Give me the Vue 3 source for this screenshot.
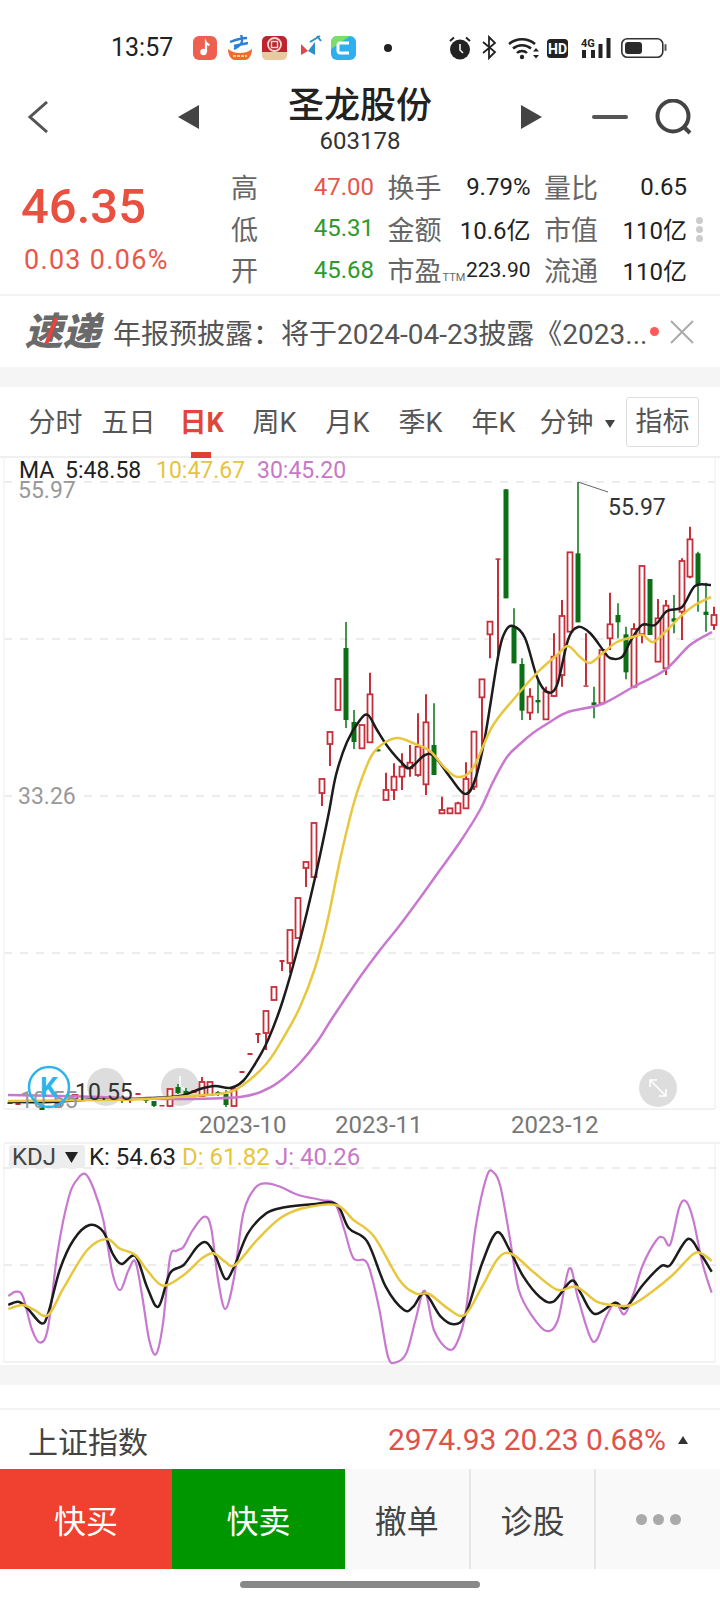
<script setup>
const smooth = (p) => {
  let d = `M${p[0][0].toFixed(1)} ${p[0][1].toFixed(1)}`
  for (let i = 0; i < p.length - 1; i++) {
    const a = p[i - 1] || p[i], b = p[i], c = p[i + 1], e = p[i + 2] || c
    const c1x = b[0] + (c[0] - a[0]) / 6, c1y = b[1] + (c[1] - a[1]) / 6
    const c2x = c[0] - (e[0] - b[0]) / 6, c2y = c[1] - (e[1] - b[1]) / 6
    d += `C${c1x.toFixed(1)} ${c1y.toFixed(1)} ${c2x.toFixed(1)} ${c2y.toFixed(1)} ${c[0].toFixed(1)} ${c[1].toFixed(1)}`
  }
  return d
}
const zoomR = (a) => a.map(([x, t, b, bt, bb, k]) => [360 + x / 3, 460 + t / 3, 460 + b / 3, 460 + bt / 3, 460 + bb / 3, k])
const candles = [
  [10,1102,1104,1102,1104,'g'],[18,1103,1105,1103,1105,'r'],[42,1106,1110,1106,1110,'g'],[58,1103,1107,1103,1107,'r'],[75,1095,1099,1095,1099,'r'],
  [122,1098,1103,1098,1101,'g'],[130,1098,1103,1098,1101,'r'],[138,1093,1095,1093,1095,'r'],[146,1097,1103,1097,1101,'g'],[154,1101,1107,1101,1106,'g'],[162,1105,1106,1105,1106,'r'],
  [170,1089,1106,1089,1106,'r'],[178,1084,1094,1087,1093,'g'],[186,1088,1096,1091,1095,'g'],[194,1090,1093,1090,1093,'r'],[202,1077,1097,1082,1096,'r'],[210,1082,1095,1082,1095,'r'],
  [218,1091,1096,1092,1095,'g'],[226,1090,1107,1094,1105,'g'],[234,1089,1106,1089,1106,'r'],[242,1071,1073,1071,1073,'r'],[250,1053,1055,1053,1055,'r'],
  [258,1033,1043,1033,1035,'r'],[266,1011,1050,1011,1033,'r'],[274,987,1000,987,1000,'r'],[282,960,971,960,962,'r'],[290,930,973,930,963,'r'],[298,898,938,898,938,'r'],
  [306,862,887,862,868,'r'],[314,823,877,823,877,'r'],[322,779,806,779,793,'r'],[330,732,766,732,744,'r'],[338,679,710,679,710,'r'],[346,622,728,648,720,'g'],[354,710,749,722,742,'g'],
  ...zoomR([
    [6,795,865,795,865,'r'],[30,638,847,703,847,'r'],[54,868,874,868,874,'g'],[78,938,1020,990,1020,'r'],[102,910,1020,950,990,'r'],[126,880,990,920,950,'r'],[150,855,950,908,925,'r'],
    [174,760,950,860,945,'r'],[198,703,1005,787,973,'r'],[222,730,945,855,945,'g'],[246,1010,1060,1050,1060,'r'],[270,1045,1060,1045,1060,'r'],[294,1025,1060,1030,1060,'r'],[318,907,1045,957,1045,'r'],[342,815,990,815,980,'r'],
    [366,658,870,658,712,'r'],[390,485,595,485,523,'r'],[414,295,600,295,297,'r'],[438,88,415,88,415,'g'],[462,445,610,500,610,'g'],[486,595,780,612,752,'g'],[510,685,780,710,758,'r'],[534,660,760,720,727,'g'],
    [558,680,780,695,778,'r'],[582,520,710,590,708,'r'],[606,420,680,468,645,'r'],[630,277,515,277,515,'r'],[654,66,487,280,487,'g'],[678,520,678,676,678,'r'],[702,680,775,727,735,'g'],[726,570,730,570,730,'r'],
    [750,398,570,493,535,'r'],[774,430,535,465,487,'g'],[798,500,658,523,637,'g'],[822,490,685,507,680,'r'],[846,318,550,318,522,'r'],[870,357,525,357,525,'g'],[894,417,605,475,605,'r'],[918,420,645,437,625,'r'],
    [942,405,520,475,485,'g'],[966,295,540,303,455,'r'],[990,200,355,238,350,'r'],[1014,275,455,280,375,'g'],[1038,368,515,455,465,'g'],[1062,440,510,465,495,'r'],
  ]),
]
const ma5 = smooth([[8,1102],[50,1102],[100,1099],[150,1098],[180,1096],[200,1089],[215,1086],[230,1088],[243,1081],[255,1064],[268,1040],[283,1000],[300,940],[315,878],[328,817],[336,775],[347,742],[360,720],[368,715],[377,730],[388,747],[402,763],[410,768],[425,755],[435,757],[450,777],[465,794],[475,780],[485,737],[498,657],[505,632],[513,626],[525,638],[537,677],[547,692],[557,685],[568,640],[578,627],[590,633],[603,650],[610,658],[622,657],[630,642],[642,625],[655,625],[667,611],[682,607],[695,586],[711,585]])
const ma10 = smooth([[8,1101],[100,1100],[150,1099],[190,1096],[225,1093],[243,1085],[267,1063],[285,1035],[300,1007],[315,968],[327,923],[340,860],[353,806],[362,778],[372,755],[384,743],[398,738],[413,743],[430,751],[445,768],[458,777],[473,768],[492,727],[513,700],[537,673],[557,655],[568,646],[580,657],[590,663],[603,653],[617,642],[633,637],[643,635],[653,642],[667,630],[682,615],[695,605],[711,597]])
const ma30 = smooth([[8,1095],[100,1097],[170,1099],[240,1097],[267,1089],[284,1078],[300,1063],[317,1042],[333,1017],[360,977],[380,950],[400,925],[420,898],[440,870],[460,842],[480,810],[493,782],[507,757],[520,744],[533,733],[550,722],[568,712],[602,704],[633,687],[665,670],[690,645],[712,632]])
const kz = (a) => smooth(a.map(([x, y]) => [x / 2.178, 1130 + y / 3]))
const kdjJ = kz([[18,498],[35,485],[50,500],[70,600],[88,638],[105,590],[125,370],[150,200],[170,145],[187,133],[205,180],[225,270],[245,430],[262,480],[280,420],[295,395],[310,500],[325,630],[340,672],[355,580],[370,385],[385,362],[400,350],[420,300],[445,260],[460,295],[475,450],[491,537],[510,440],[530,250],[555,175],[580,160],[610,170],[650,195],[700,210],[730,222],[750,300],[770,385],[800,400],[825,530],[845,680],[862,697],[885,670],[905,570],[925,482],[945,600],[975,657],[995,640],[1015,540],[1035,300],[1060,140],[1075,127],[1090,170],[1110,320],[1130,480],[1160,560],[1190,603],[1215,570],[1240,415],[1260,510],[1292,635],[1320,560],[1340,518],[1360,553],[1380,490],[1400,405],[1430,330],[1445,323],[1460,343],[1480,230],[1495,215],[1510,270],[1530,400],[1550,488]])
const kdjK = kz([[18,525],[40,515],[60,535],[90,580],[105,550],[130,420],[160,330],[195,285],[225,305],[245,370],[265,402],[295,378],[320,470],[345,530],[370,430],[400,405],[430,350],[450,338],[470,380],[491,447],[510,410],[540,310],[580,250],[620,232],[680,223],[732,222],[760,295],[800,335],[840,470],[880,540],[900,530],[925,490],[960,560],[990,583],[1015,550],[1050,400],[1082,307],[1110,360],[1140,440],[1175,500],[1205,515],[1245,452],[1265,490],[1295,552],[1340,518],[1362,535],[1400,465],[1440,408],[1460,405],[1498,327],[1525,370],[1550,425]])
const kdjD = kz([[18,537],[50,525],[75,540],[105,555],[140,470],[190,360],[232,327],[260,355],[295,375],[320,420],[355,467],[400,435],[440,385],[465,370],[490,395],[512,405],[560,330],[610,265],[660,235],[732,225],[770,270],[815,320],[870,450],[905,490],[935,492],[975,535],[1012,555],[1050,470],[1085,385],[1115,372],[1165,430],[1215,480],[1255,470],[1300,515],[1335,525],[1375,525],[1420,485],[1465,435],[1510,372],[1530,372],[1550,393]])
const tabs = ['分时', '五日', '日K', '周K', '月K', '季K', '年K', '分钟']
const stats = [
  { l: '高', v: '47.00', c: 'up', l2: '换手', v2: '9.79%', l3: '量比', v3: '0.65' },
  { l: '低', v: '45.31', c: 'down', l2: '金额', v2: '10.6亿', l3: '市值', v3: '110亿' },
  { l: '开', v: '45.68', c: 'down', l2: '市盈', ttm: true, v2: '223.90', l3: '流通', v3: '110亿' },
]
</script>

<template>
  <div class="page">
    <div class="status">
      <span class="time">13:57</span>
      <svg class="st-apps" width="176" height="26" viewBox="0 0 176 26">
        <rect x="2" y="1" width="24" height="24" rx="6" fill="#ee5f50"/>
        <circle cx="12.500" cy="17" r="3.200" fill="#fff"/>
        <path d="M15 17V7.500c1 1.800 2.500 2.200 3.500 2.600" stroke="#fff" stroke-width="2.200" fill="none"/>
        <path d="M39 7c5-2 11-4 17-4M43 11c4-1 9-2 14-3M50 0c2 4 1 8-1 10s-4 3-6 4" stroke="#2a7fd8" stroke-width="2.400" fill="none"/>
        <path d="M37 14c4 3 8 4 12 4s8-1 12-4c0 6-3 11-7 11H44c-4 0-7-5-7-11z" fill="#ef6b30"/>
        <path d="M42 21h14" stroke="#f7d27a" stroke-width="2" stroke-dasharray="3 1"/>
        <rect x="71" y="1" width="25" height="18" rx="5" fill="#bd2330"/>
        <path d="M71 14h25v6c0 3-2 5-5 5H76c-3 0-5-2-5-5z" fill="#e9c9a0"/>
        <rect x="71" y="8" width="25" height="9" fill="#bd2330"/>
        <circle cx="83.500" cy="9.500" r="6.500" fill="none" stroke="#f3d9cf" stroke-width="1.800"/>
        <rect x="80.500" y="6.500" width="6" height="6" fill="none" stroke="#f3d9cf" stroke-width="1.400"/>
        <path d="M110 20V9l7 7z" fill="#e04848"/>
        <path d="M117 16l7-9v13z" fill="#2d8fc4"/>
        <path d="M119 7l10-6M126 1l4 5" stroke="#2d8fc4" stroke-width="2" fill="none"/>
        <rect x="140" y="1" width="25" height="24" rx="6" fill="#2fb0ee"/>
        <path d="M140 14V7c0-3 3-6 6-6h13z" fill="#7edc6a"/>
        <path d="M158 8h-9c-1 0-2 1-2 2v6c0 1 1 2 2 2h9" stroke="#fff" stroke-width="3" fill="none"/>
      </svg>
      <span class="st-dot"></span>
      <svg class="st-sys" width="220" height="26" viewBox="0 0 220 26">
        <circle cx="11" cy="14.500" r="10" fill="#222"/>
        <path d="M11 9v6l3 3" stroke="#fff" stroke-width="1.500" fill="none"/>
        <path d="M1 6l4-3.500M21 6l-4-3.500" stroke="#222" stroke-width="2"/>
        <path d="M34 7l12 10-6 6V2l6 6-12 10" stroke="#222" stroke-width="1.800" fill="none"/>
        <path d="M60 9a20 20 0 0 1 26 0M64 13.500a14 14 0 0 1 18 0M68 18a7 7 0 0 1 10 0" stroke="#222" stroke-width="2.500" fill="none"/>
        <circle cx="73" cy="22" r="2.200" fill="#222"/>
        <path d="M84 16.500l3-3.500 3 3.500zM84 20l3 3.500 3-3.500z" fill="#222"/>
        <rect x="98" y="4" width="21" height="19" rx="3.500" fill="#222"/>
        <text x="108.500" y="18.500" class="hd">HD</text>
        <text x="132" y="12" class="fg">4G</text>
        <path d="M135 15v8M144 15v8M151.500 9v14M159.500 3v20" stroke="#222" stroke-width="4" fill="none"/>
        <rect x="172.800" y="3.800" width="41" height="18.500" rx="5.500" fill="none" stroke="#333" stroke-width="1.600"/>
        <rect x="176" y="7" width="17" height="12" rx="3" fill="#2a2a2a"/>
        <rect x="215.500" y="9" width="2" height="7" rx="1" fill="#555"/>
      </svg>
    </div>

    <header class="head">
      <svg class="back" width="20" height="32" viewBox="0 0 20 32"><path d="M19 1L2 16l17 15" stroke="#555" stroke-width="3" fill="none"/></svg>
      <svg class="tri-l" width="21" height="24" viewBox="0 0 21 24"><path d="M21 0v24L0 12z" fill="#444"/></svg>
      <div class="title-col">
        <div class="title">圣龙股份</div>
        <div class="code">603178</div>
      </div>
      <svg class="tri-r" width="21" height="24" viewBox="0 0 21 24"><path d="M0 0v24l21-12z" fill="#444"/></svg>
      <span class="minus"></span>
      <svg class="search" width="38" height="36" viewBox="0 0 38 36"><circle cx="18" cy="17" r="15.500" stroke="#444" stroke-width="4" fill="none"/><path d="M29 28l6 6" stroke="#444" stroke-width="4"/></svg>
    </header>

    <section class="quote">
      <div class="price-col">
        <div class="price">46.35</div>
        <div class="chg">0.03 0.06%</div>
      </div>
      <div class="stats">
        <template v-for="s in stats" :key="s.l">
          <div class="cell"><span class="lb">{{ s.l }}</span><span class="val" :class="s.c">{{ s.v }}</span></div>
          <div class="cell"><span class="lb">{{ s.l2 }}<i v-if="s.ttm" class="ttm">TTM</i></span><span class="val" :class="{ small: s.ttm }">{{ s.v2 }}</span></div>
          <div class="cell"><span class="lb">{{ s.l3 }}</span><span class="val">{{ s.v3 }}</span></div>
        </template>
      </div>
      <div class="dots"><i></i><i></i><i></i></div>
    </section>

    <section class="news">
      <span class="logo">速递<i class="bolt"></i></span>
      <span class="news-text">年报预披露：将于2024-04-23披露《2023...</span>
      <i class="news-dot"></i>
      <svg class="close" width="24" height="24" viewBox="0 0 24 24"><path d="M1 1l22 22M23 1L1 23" stroke="#aaa" stroke-width="2"/></svg>
    </section>

    <div class="band"></div>

    <nav class="tabs">
      <div v-for="t in tabs" :key="t" class="tab" :class="{ on: t === '日K' }">
        {{ t }}<i v-if="t === '分钟'" class="caret"></i><i v-if="t === '日K'" class="bar"></i>
      </div>
      <div class="zb">指标</div>
    </nav>

    <svg class="chart" width="720" height="682" viewBox="0 458 720 682">
      <g class="grid">
        <path d="M4 482H715M4 639H715M4 796H715M4 953H715"/>
      </g>
      <path d="M4 458V1109M715 458V1109" stroke="#f4f4f4" stroke-width="1.500"/>
      <path d="M4 1109H715" stroke="#eee" stroke-width="1.500"/>
      <circle cx="106" cy="1087" r="19" fill="#ddd"/>
      <circle cx="180" cy="1087" r="19" fill="#ddd"/>
      <path d="M180 1076v11l5 2" stroke="#fff" stroke-width="1.500" fill="none"/>
      <g v-for="c in candles" :key="c[0]">
        <template v-if="c[5] === 'r'">
          <path :d="`M${c[0]} ${c[1]}V${c[3]}M${c[0]} ${c[4]}V${c[2]}`" stroke="#c42f3a" stroke-width="2" fill="none"/>
          <rect v-if="c[4] - c[3] > 3" :x="c[0] - 2.500" :y="c[3]" width="5" :height="c[4] - c[3]" fill="#fff" stroke="#c42f3a" stroke-width="1.800"/>
          <rect v-else :x="c[0] - 2.500" :y="c[3]" width="5" :height="Math.max(c[4] - c[3], 1.500)" fill="#c42f3a"/>
        </template>
        <template v-else>
          <path :d="`M${c[0]} ${c[1]}V${c[2]}`" stroke="#2f8a3c" stroke-width="1.800"/>
          <rect :x="c[0] - 2.500" :y="c[3]" width="5" :height="Math.max(c[4] - c[3], 2)" fill="#0c6f16"/>
        </template>
      </g>
      <path :d="ma5" class="ln" stroke="#1c1c1c"/>
      <path :d="ma30" class="ln" stroke="#c878cf"/>
      <path :d="ma10" class="ln" stroke="#e8c73e"/>
      <path d="M578 482l30 10" stroke="#666" stroke-width="1" fill="none"/>
      <text x="608" y="515" class="t23" fill="#333">55.97</text>
      <text x="19" y="478" class="t23" fill="#222">MA</text>
      <text x="65" y="478" class="t23" fill="#222">5:48.58</text>
      <text x="156" y="478" class="t23" fill="#e6c53d">10:47.67</text>
      <text x="257" y="478" class="t23" fill="#c878c8">30:45.20</text>
      <text x="18" y="498" class="t23" fill="#999">55.97</text>
      <rect x="12" y="786" width="70" height="20" fill="#fff"/>
      <text x="18" y="804" class="t23" fill="#999">33.26</text>
      <text x="20" y="1108" class="t23" fill="#999">10.55</text>
      <text x="75" y="1100" class="t23" fill="#333">10.55</text>
      <circle cx="49" cy="1087" r="20" fill="none" stroke="#2db5ea" stroke-width="2.500"/>
      <text x="49" y="1097" class="kk">K</text>
      <circle cx="658" cy="1088" r="19" fill="#ddd"/>
      <path d="M650 1080l16 16M650 1087v-7h7M666 1089v7h-7" stroke="#fff" stroke-width="1.600" fill="none"/>
      <text x="199" y="1133" class="t24" fill="#777">2023-10</text>
      <text x="335" y="1133" class="t24" fill="#777">2023-11</text>
      <text x="511" y="1133" class="t24" fill="#777">2023-12</text>
    </svg>

    <svg class="kdj" width="720" height="225" viewBox="0 1140 720 225">
      <path d="M4 1143H720" stroke="#eee" stroke-width="1.500"/>
      <path d="M4 1143V1362M715 1143V1362" stroke="#f4f4f4" stroke-width="1.500"/>
      <path d="M4 1362H715" stroke="#eee" stroke-width="1.500"/>
      <g class="grid"><path d="M4 1168H720M4 1265H720"/></g>
      <rect x="9" y="1145" width="76" height="23" rx="3" fill="#ededed"/>
      <text x="12" y="1165" class="t24" fill="#444">KDJ</text>
      <path d="M65 1152h13l-6.500 11z" fill="#222"/>
      <text x="89" y="1165" class="t24" fill="#222">K: 54.63</text>
      <text x="182" y="1165" class="t24" fill="#e6c53d">D: 61.82</text>
      <text x="275" y="1165" class="t24" fill="#c878c8">J: 40.26</text>
      <path :d="kdjJ" class="ln2" stroke="#c878cf"/>
      <path :d="kdjK" class="ln" stroke="#1c1c1c"/>
      <path :d="kdjD" class="ln" stroke="#e8c73e"/>
    </svg>

    <div class="band band2"></div>
    <div class="peek"><span>NEW</span></div>

    <section class="index">
      <span class="idx-name">上证指数</span>
      <span class="idx-val">2974.93 20.23 0.68%</span>
      <i class="idx-up"></i>
    </section>

    <section class="btns">
      <div class="btn buy">快买</div>
      <div class="btn sell">快卖</div>
      <div class="btn pl">撤单</div>
      <div class="btn pl">诊股</div>
      <div class="btn pl more"><i></i><i></i><i></i></div>
    </section>
    <div class="home"><i></i></div>
  </div>
</template>

<style>
html, body { background: #fff; }
</style>

<style scoped>
.page { width: 720px; height: 1601px; overflow: hidden; background: #fff; font-family: Roboto, "Noto Sans CJK SC", sans-serif; color: #333; }
.status { height: 76px; display: flex; align-items: center; padding: 20px 0 0 111px; box-sizing: border-box; }
.time { font-size: 25px; line-height: 30px; width: 80px; color: #222; }
.st-dot { width: 8px; height: 8px; border-radius: 50%; background: #222; margin-left: 17px; }
.st-sys { margin-left: 57px; }
.hd { font: 700 14px Roboto, sans-serif; fill: #fff; text-anchor: middle; }
.fg { font: 700 11px Roboto, sans-serif; fill: #222; }

.head { height: 91px; box-sizing: border-box; padding: 0 0 9px 28px; display: flex; align-items: center; }
.tri-l { margin-left: 130px; }
.title-col { width: 322px; margin-top: 5px; text-align: center; }
.title { font-size: 36px; line-height: 42px; font-weight: 500; color: #222; }
.code { font-size: 24px; line-height: 28px; color: #333; }
.minus { width: 36px; height: 4px; border-radius: 2px; background: #555; margin-left: 50px; }
.search { margin-left: 27px; }

.quote { height: 127px; position: relative; display: flex; }
.price-col { width: 231px; box-sizing: border-box; padding-left: 21px; }
.price { font-size: 49px; line-height: 56px; margin-top: 12px; color: #e8503f; font-weight: 500; }
.chg { font-size: 27px; line-height: 34px; margin: 8px 0 0 3px; letter-spacing: 1.300px; color: #e8574a; }
.stats { display: grid; grid-template-columns: repeat(3, 143px); column-gap: 13.500px; grid-auto-rows: 41.500px; margin-top: -1px; }
.cell { display: flex; justify-content: space-between; align-items: center; }
.lb { font-size: 27px; color: #666; white-space: nowrap; }
.ttm { font-style: normal; font-size: 11px; color: #666; margin-left: 1px; }
.val { font-size: 24px; color: #222; white-space: nowrap; }
.val.small { font-size: 21px; }
.val.up { color: #e4564a; }
.val.down { color: #2c9a2c; }
.dots { position: absolute; left: 696px; top: 50px; display: flex; flex-direction: column; gap: 2px; }
.dots i { width: 7px; height: 7px; border-radius: 50%; background: #ccc; }

.news { height: 73px; border-top: 2px solid #f3f3f3; box-sizing: border-box; display: flex; align-items: center; padding-left: 28px; }
.logo { position: relative; width: 75px; font-size: 38px; line-height: 40px; font-weight: 900; color: #6a6a6a; white-space: nowrap; transform: skewX(-14deg); }
.bolt { position: absolute; left: 21px; top: 6px; width: 4px; height: 26px; background: #e8443a; transform: skewX(-8deg); }
.news-text { font-size: 28px; color: #555; margin-left: 10px; width: 533px; white-space: nowrap; }
.news-dot { width: 9px; height: 9px; border-radius: 50%; background: #ff5a5a; margin-left: 4px; }
.close { margin-left: 11px; }

.band { height: 20px; background: #f5f5f5; }

.tabs { height: 71px; box-sizing: border-box; border-bottom: 2px solid #f0f0f0; padding-left: 19px; display: flex; align-items: flex-start; }
.tab { width: 73px; height: 69px; line-height: 69px; text-align: center; position: relative; font-size: 27px; color: #555; white-space: nowrap; margin-top: 2px; }
.tab.on { color: #e0473c; font-weight: 700; }
.bar { position: absolute; left: 26px; bottom: 0px; width: 20px; height: 6px; background: #e23e36; }
.caret { position: absolute; left: 75px; top: 31px; width: 0; height: 0; border-left: 5.500px solid transparent; border-right: 5.500px solid transparent; border-top: 8px solid #444; }
.zb { margin: 10px 0 0 23px; width: 73px; height: 50px; box-sizing: border-box; border: 1px solid #ddd; border-radius: 3px; font-size: 27px; line-height: 48px; text-align: center; color: #555; }

.chart, .kdj { display: block; }
.grid path { stroke: #e6e6e6; stroke-width: 1.500; stroke-dasharray: 8 8; fill: none; }
.ln { fill: none; stroke-width: 2.500; }
.ln2 { fill: none; stroke-width: 2.200; }
.t23 { font-size: 23px; }
.t24 { font-size: 24px; }
.kk { font-size: 28px; font-weight: 700; fill: #2db5ea; text-anchor: middle; }

.band2 { height: 20px; }
.peek { height: 23px; position: relative; overflow: hidden; }
.peek span { position: absolute; left: 632px; top: 20px; font-size: 20px; font-weight: 700; font-style: italic; color: #e0473c; letter-spacing: 2px; }

.index { height: 61px; border-top: 2px solid #f3f3f3; box-sizing: border-box; display: flex; align-items: center; padding-left: 28px; }
.idx-name { font-size: 30px; color: #444; width: 360px; }
.idx-val { font-size: 30px; color: #df524a; white-space: nowrap; letter-spacing: -0.100px; }
.idx-up { width: 0; height: 0; margin-left: 12px; border-left: 5px solid transparent; border-right: 5px solid transparent; border-bottom: 8px solid #333; }

.btns { height: 100px; display: flex; }
.btn { display: flex; align-items: center; justify-content: center; font-size: 32px; box-sizing: border-box; }
.buy { width: 172px; background: #f04030; color: #fff; }
.sell { width: 173px; background: #009600; color: #fff; }
.pl { flex: 1; background: #f9f9f9; color: #444; border-left: 2px solid #e4e6ec; }
.pl:nth-child(3) { border-left: 0; }
.more { gap: 6px; }
.more i { width: 11px; height: 11px; border-radius: 50%; background: #aaa; }
.home { height: 32px; display: flex; justify-content: center; align-items: flex-start; padding-top: 12px; box-sizing: border-box; }
.home i { width: 240px; height: 7px; border-radius: 4px; background: #888; }
</style>
